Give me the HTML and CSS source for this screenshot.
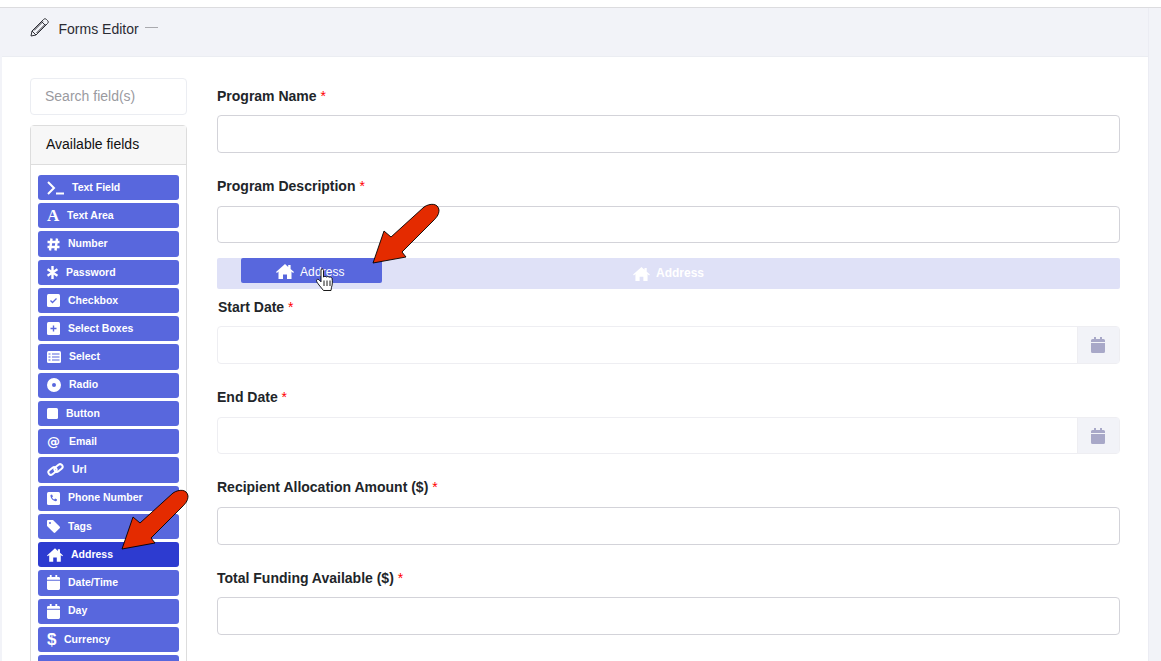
FILE: index.html
```html
<!DOCTYPE html>
<html lang="en">
<head>
<meta charset="utf-8">
<title>Forms Editor</title>
<link rel="stylesheet" href="styles.css">
</head>
<body>
<svg class="defs" width="0" height="0" aria-hidden="true">
  <defs>
    <symbol id="house" viewBox="0 0 18 15"><path d="M9 0l3.200 2.900V1h2.400v4L18 8l-.9 1-1.600-1.400V15H11v-4.600H7V15H2.500V7.600L.9 9 0 8z"/></symbol>
    <symbol id="cal" viewBox="0 0 14 16"><path d="M3 0h2v2h4V0h2v2h1.500A1.500 1.500 0 0 1 14 3.500V5H0V3.500A1.500 1.500 0 0 1 1.500 2H3zM0 6h14v8.500a1.500 1.500 0 0 1-1.500 1.500h-11A1.500 1.500 0 0 1 0 14.500z"/></symbol>
    <symbol id="arrow" viewBox="0 0 68 61"><path d="M1 60L12 28l7 6L52 4c6-4 14-4 15 3 0 5-3 8-6 11L30 49l4 5z" fill="#e42b00" stroke="#000" stroke-width=".9"/></symbol>
  </defs>
</svg>
<div class="topbar"></div>
<div class="card">
  <header class="card-head">
    <svg class="pencil" width="19" height="19" viewBox="0 0 19 19"><path d="M1 18l1-5L13.500 1.500c1-1 2-1 3 0l1 1c1 1 1 2 0 3L6 17zM2 13l4 4M11.500 3.500l4 4M4 12.500L13 3.500M6.500 15L15.500 6" fill="none" stroke="#2f2f37" stroke-width="1"/></svg>
    <span class="head-title">Forms Editor</span>
    <span class="head-dash"></span>
  </header>
  <div class="card-body">
    <aside class="side">
      <div class="search">Search field(s)</div>
      <section class="panel">
        <div class="panel-head">Available fields</div>
        <div class="field-list">
          <div class="fbtn"><svg width="17" height="14" viewBox="0 0 17 14"><path d="M1 1l6 6-6 6M9 12.500h8" fill="none" stroke="#fff" stroke-width="2"/></svg><span>Text Field</span></div>
          <div class="fbtn"><b class="gl gl-a">A</b><span>Text Area</span></div>
          <div class="fbtn"><svg width="13" height="13" viewBox="0 0 13 13"><path d="M4.500.5L3 12.500M10 .5L8.500 12.500M.5 4h12M.5 9h12" fill="none" stroke="#fff" stroke-width="2.400"/></svg><span>Number</span></div>
          <div class="fbtn"><svg width="11" height="13" viewBox="0 0 11 13"><path d="M5.500 0v13M.5 3.200l10 6.600M10.500 3.200l-10 6.600" fill="none" stroke="#fff" stroke-width="2.400"/></svg><span>Password</span></div>
          <div class="fbtn"><svg width="13" height="13" viewBox="0 0 13 13"><rect width="13" height="13" rx="1.500" fill="#fff"/><path d="M3.500 6.500l2 2 4-4" fill="none" stroke="#5867dd" stroke-width="1.300"/></svg><span>Checkbox</span></div>
          <div class="fbtn"><svg width="13" height="13" viewBox="0 0 13 13"><rect width="13" height="13" rx="1.500" fill="#fff"/><path d="M6.500 3.500v6M3.500 6.500h6" stroke="#5867dd" stroke-width="1.400"/></svg><span>Select Boxes</span></div>
          <div class="fbtn"><svg width="14" height="12" viewBox="0 0 14 12"><rect width="14" height="12" rx="1.500" fill="#fff"/><path d="M1.500 3h2M5 3h7.500M1.500 6h2M5 6h7.500M1.500 9h2M5 9h7.500" stroke="#5867dd" stroke-width="1.200"/></svg><span>Select</span></div>
          <div class="fbtn"><svg width="14" height="14" viewBox="0 0 14 14"><circle cx="7" cy="7" r="4.500" fill="none" stroke="#fff" stroke-width="5"/></svg><span>Radio</span></div>
          <div class="fbtn"><svg width="11" height="11" viewBox="0 0 11 11"><rect width="11" height="11" rx="1.500" fill="#fff"/></svg><span>Button</span></div>
          <div class="fbtn"><b class="gl gl-at">@</b><span>Email</span></div>
          <div class="fbtn"><svg width="17" height="13" viewBox="0 0 17 13"><g fill="none" stroke="#fff" stroke-width="2"><rect x="-4.500" y="-2.500" width="9" height="5" rx="2.500" transform="translate(5.500 8) rotate(-38)"/><rect x="-4.500" y="-2.500" width="9" height="5" rx="2.500" transform="translate(11.500 5) rotate(-38)"/></g></svg><span>Url</span></div>
          <div class="fbtn"><svg width="13" height="13" viewBox="0 0 13 13"><rect width="13" height="13" rx="1.500" fill="#fff"/><path d="M3.500 3l1.500-.5 1 2-1 .8c.5 1.100 1.200 1.800 2.300 2.300l.8-1 2 1-.5 1.500c-3.200.5-6.500-3-6.100-6.100z" fill="#5867dd"/></svg><span>Phone Number</span></div>
          <div class="fbtn"><svg width="13" height="13" viewBox="0 0 13 13"><path fill-rule="evenodd" d="M0 1.200C0 .5.500 0 1.200 0H6l6.600 6.600c.5.500.5 1.200 0 1.700l-4.300 4.300c-.5.500-1.200.5-1.700 0L0 6zM3 2a1 1 0 1 0 0 2 1 1 0 0 0 0-2z" fill="#fff"/></svg><span>Tags</span></div>
          <div class="fbtn fbtn-active"><svg class="ic-house" width="16" height="14"><use href="#house"/></svg><span>Address</span></div>
          <div class="fbtn"><svg class="ic-house" width="13" height="15"><use href="#cal"/></svg><span>Date/Time</span></div>
          <div class="fbtn"><svg class="ic-house" width="13" height="15"><use href="#cal"/></svg><span>Day</span></div>
          <div class="fbtn"><b class="gl gl-dollar">$</b><span>Currency</span></div>
          <div class="fbtn"></div>
        </div>
      </section>
    </aside>
    <main class="form">
      <div class="field">
        <label class="lbl">Program Name <i>*</i></label>
        <div class="inp"></div>
      </div>
      <div class="field field-tight field-b">
        <label class="lbl">Program Description <i>*</i></label>
        <div class="inp"></div>
      </div>
      <div class="dropzone">
        <svg class="ic-house" width="17" height="14"><use href="#house"/></svg><span>Address</span>
        <div class="dragged">
          <svg class="ic-house" width="18" height="15"><use href="#house"/></svg><span>Address</span>
        </div>
      </div>
      <div class="field">
        <label class="lbl lbl-date">Start Date <i>*</i></label>
        <div class="date-group"><div class="date-in"></div><div class="date-addon"><svg width="14" height="16"><use href="#cal"/></svg></div></div>
      </div>
      <div class="field field-b">
        <label class="lbl">End Date <i>*</i></label>
        <div class="date-group"><div class="date-in"></div><div class="date-addon"><svg width="14" height="16"><use href="#cal"/></svg></div></div>
      </div>
      <div class="field field-c">
        <label class="lbl">Recipient Allocation Amount ($) <i>*</i></label>
        <div class="inp"></div>
      </div>
      <div class="field">
        <label class="lbl">Total Funding Available ($) <i>*</i></label>
        <div class="inp"></div>
      </div>
    </main>
  </div>
</div>
<svg class="arrow arrow-side" width="68" height="61"><use href="#arrow"/></svg>
<svg class="arrow arrow-main" width="68" height="61"><use href="#arrow"/></svg>
<svg class="hand" width="19" height="25" viewBox="0 0 19 25"><path d="M5 1.500c1-1 2.500-.5 2.500 1V9c.8-.8 2.200-.8 2.800 0 .8-.6 2.200-.6 2.800.3.800-.5 2.400-.3 2.900 1 .6 2.500.5 6.500-.5 9l-.5 3.200H7.500L3 17c-1-1.500-2.500-3-2.500-4.500 0-1.200 1.500-1.500 2.500-.7l2 2z" fill="#fff" stroke="#000" stroke-width=".9"/><path d="M8 12.500V18M11 12.500V18M14 12.500V18" stroke="#000" stroke-width=".9"/></svg>
</body>
</html>
```
FILE: styles.css
```css
* { box-sizing: border-box; }
html, body { margin: 0; height: 661px; overflow: hidden; }
body {
  position: relative;
  background: #f2f3f8;
  font-family: "Liberation Sans", Arial, sans-serif;
  color: #212529;
}
.defs { position: absolute; }
.topbar { height: 8px; background: #fff; border-bottom: 1px solid #dcdcdf; }
.card {
  width: 1147px;
  margin-left: 2px;
  height: 653px;
  background: #fff;
  border-right: 1px solid #ebecf3;
  overflow: hidden;
}
.card-head {
  height: 49px;
  background: #f2f3f8;
  border-bottom: 1px solid #ebedf2;
  display: flex;
  align-items: flex-start;
  padding: 10px 0 0 28px;
}
.pencil { display: block; }
.head-title { font-size: 14px; line-height: 22px; margin-left: 9.500px; color: #2b2b33; }
.head-dash { width: 13px; height: 1px; background: #a9a9ae; margin: 9px 0 0 6.500px; }
.card-body { display: flex; gap: 30px; padding: 21px 28px 0; }
.side { width: 157px; flex: none; }
.search {
  height: 37px;
  border: 1px solid #ebedf2;
  border-radius: 4px;
  padding: 0 14px;
  font-size: 14px;
  line-height: 35px;
  color: #9a9a9f;
}
.panel { margin-top: 10px; border: 1px solid #ddd; border-radius: 4px 4px 0 0; }
.panel-head {
  height: 39px;
  background: #f7f7f7;
  border-bottom: 1px solid #ddd;
  padding: 0 15px;
  font-size: 14px;
  line-height: 37px;
  color: #111;
}
.field-list { display: grid; grid-auto-rows: 25.235px; gap: 3px; padding: 10px 7px 0; }
.fbtn {
  background: #5867dd;
  border-radius: 3px;
  display: flex;
  align-items: center;
  gap: 8px;
  padding-left: 9px;
  color: #fff;
  font-size: 10.500px;
  font-weight: 700;
}
.fbtn svg { flex: none; }
.fbtn span { margin-bottom: 1.550px; }
.fbtn-active { background: #2d3bd0; }
.ic-house { fill: #fff; }
.gl { font-weight: 700; line-height: 1; color: #fff; }
.gl-a { font-family: "Liberation Serif", serif; font-size: 17px; width: 12px; }
.gl-at { font-family: "DejaVu Sans", sans-serif; font-size: 13px; width: 14px; }
.gl-dollar { font-size: 17px; width: 9px; }
.form { flex: 1; padding-top: 8px; min-width: 0; }
.field { margin-bottom: 23px; }
.field-tight { margin-bottom: 15px; }
.lbl { display: block; height: 20px; margin-bottom: 9px; font-size: 14px; line-height: 20px; font-weight: 700; }
.field-b .lbl, .field-c .lbl { margin-bottom: 10px; }
.lbl i { font-style: normal; font-weight: 400; color: #f00; }
.lbl-date { padding-left: 1px; }
.inp { height: 38px; border: 1px solid #d3d3d9; border-radius: 4px; }
.field-b .inp { height: 37px; }
.dropzone {
  position: relative;
  height: 31px;
  margin-bottom: 8px;
  background: #dfe1f7;
  border-radius: 2px;
  display: flex;
  align-items: center;
  justify-content: center;
  gap: 6px;
  color: #fff;
  font-size: 12px;
  font-weight: 700;
}
.dropzone > span { margin-bottom: 2px; }
.dragged {
  position: absolute;
  left: 24px;
  top: 0;
  width: 141px;
  height: 25px;
  background: #5867dd;
  border-radius: 2px;
  display: flex;
  align-items: center;
  gap: 6px;
  padding-left: 35px;
  font-weight: 400;
  letter-spacing: .1px;
}
.dragged svg { margin-top: 1px; }
.dragged span { margin-top: 3px; }
.date-group {
  height: 38px;
  display: flex;
  border: 1px solid #eeeef2;
  border-radius: 4px;
}
.field-b .date-group { height: 37px; }
.date-in { flex: 1; }
.date-addon {
  width: 42px;
  background: #f2f3f8;
  border-left: 1px solid #eeeef2;
  display: flex;
  align-items: center;
  justify-content: center;
  fill: #a8a8c8;
}
.date-addon svg { margin-right: 1px; }
.arrow, .hand { position: absolute; display: block; }
.arrow-side { left: 121px; top: 489px; }
.arrow-main { left: 372px; top: 203px; }
.hand { left: 316px; top: 268px; }
```
